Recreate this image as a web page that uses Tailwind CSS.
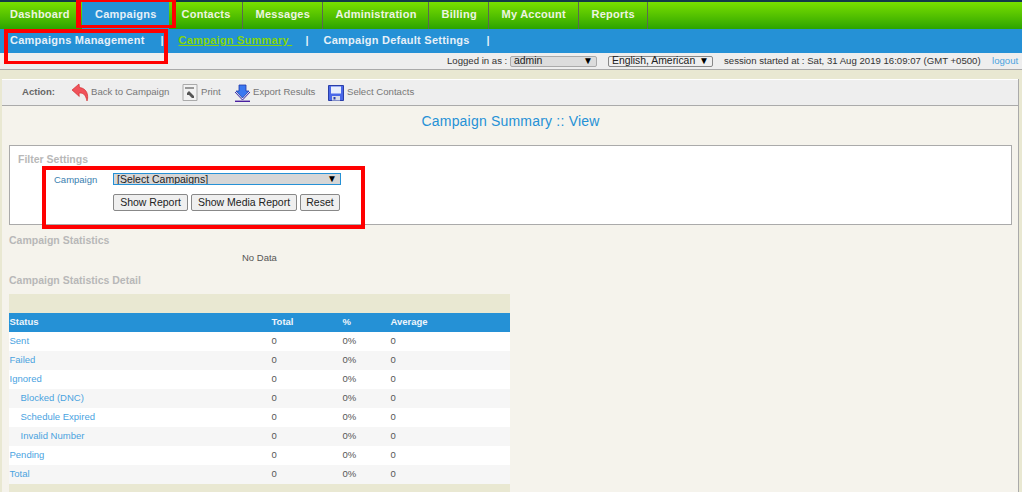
<!DOCTYPE html>
<html lang="en">
<head>
  <meta charset="UTF-8">
  <title>Campaign Summary :: View</title>
  <script src="https://cdn.jsdelivr.net/npm/@tailwindcss/browser@4"></script>
</head>
<body class="bg-white h-[492px] overflow-hidden font-['Liberation_Sans',Arial,sans-serif]">
<div class="relative w-[1022px] h-[492px] overflow-hidden bg-[#e9e8d2]">

  <!-- Main nav -->
  <div class="h-[2px] bg-[#12384a]"></div>
  <nav class="flex h-[27px] bg-gradient-to-b from-[#78e000] to-[#2aa400] text-[11px] font-bold tracking-[0.25px] text-[#eef5e0] leading-[25px]">
    <a class="w-[82px] pl-[10px]">Dashboard</a>
    <a class="w-[87px] pl-[13px] bg-[#2591d6] text-[#e6f0f8]">Campaigns</a>
    <a class="w-[74px] pl-[12.5px] border-r border-[#5a6a50]">Contacts</a>
    <a class="w-[80px] pl-[12.5px] border-r border-[#5a6a50]">Messages</a>
    <a class="w-[106px] pl-[12.5px] border-r border-[#5a6a50]">Administration</a>
    <a class="w-[60px] pl-[12.5px] border-r border-[#5a6a50]">Billing</a>
    <a class="w-[90px] pl-[12.5px] border-r border-[#5a6a50]">My Account</a>
    <a class="w-[69px] pl-[12.5px] border-r border-[#5a6a50]">Reports</a>
  </nav>

  <!-- Sub nav -->
  <div class="flex h-[24px] bg-[#2591d6] text-[11px] font-bold tracking-[0.25px] text-[#e6f0f8] leading-[22px]">
    <a class="w-[160.5px] pl-[10px]">Campaigns Management</a>
    <span class="w-[18px]">|</span>
    <a class="w-[127px] text-[#84d60a] underline whitespace-pre">Campaign Summary </a>
    <span class="w-[18px]">|</span>
    <a class="w-[163px]">Campaign Default Settings</a>
    <span>|</span>
  </div>

  <!-- Session bar -->
  <div class="flex items-center h-[17px] pl-[447px] bg-[#eeeeee] border-b border-[#aaaaaa] text-[9.6px] text-[#333]">
    <span class="w-[63px]">Logged in as :</span>
    <div class="flex justify-between items-center w-[87px] h-[11px] px-[3px] mr-[11px] border border-[#aaa] rounded-[2px] bg-[#dcdcdc] text-[10.400px] text-[#222] leading-none whitespace-nowrap">
      <span>admin</span><span class="text-[10px] text-black">▼</span>
    </div>
    <div class="flex justify-between items-center w-[105px] h-[11px] px-[3px] mr-[11px] border border-[#888] rounded-[2px] bg-[#efefef] text-[10.400px] text-[#222] leading-none whitespace-nowrap">
      <span>English, American</span><span class="text-[10px] text-black">▼</span>
    </div>
    <span class="w-[268px]">session started at : Sat, 31 Aug 2019 16:09:07 (GMT +0500)</span>
    <a class="text-[#4aa3df]">logout</a>
  </div>

  <!-- Panel -->
  <main class="ml-[2px] mt-[9px] w-[1017px] h-[420px] bg-[#f5f3ec] border-r border-[#aaaaaa]">
    <div class="flex items-center h-[27px] bg-[#eeeeee] border-t border-white border-b border-b-[#aaaaaa] text-[9.6px] text-[#777]">
      <b class="w-[69px] pl-[20px] text-[#666]">Action:</b>
      <svg class="w-[18px] h-[19px]" viewBox="0 0 18 19">
        <path d="M1 7 8 1l.5 3.500C13 5 16 8 16.500 12c.3 2 .3 4-.5 6-.6-3-2-6-3.500-7-1.500-1-3-1-4.500-.8l.3 3.300z" fill="#f0525a" stroke="#c22" stroke-width=".6"/>
      </svg>
      <span class="w-[93px] pl-[2px]">Back to Campaign</span>
      <svg class="w-[16px] h-[17px]" viewBox="0 0 16 17">
        <path d="M1 .5h14v16H1z" fill="#f2f2f2" stroke="#aaa"/>
        <path d="M3 3h9v2H3z" fill="#999"/>
        <path d="M5 9l2-2 2 2 3 3v2h-2L7 11H5z" fill="#555"/>
      </svg>
      <span class="w-[36px] pl-[3px]">Print</span>
      <svg class="w-[17px] h-[18px]" viewBox="0 0 17 18">
        <path d="M5 1h7v6h3l-6.500 7L2 7h3z" fill="#3a78f0" stroke="#2238a8" stroke-width=".8"/>
        <path d="M1 8l7.500 8L16 8" fill="none" stroke="#3b2aa8" stroke-width="1"/>
        <path d="M1 17.300h15" stroke="#4a20a0" stroke-width="1.400"/>
      </svg>
      <span class="w-[77px] pl-[2px]">Export Results</span>
      <svg class="w-[16px] h-[16px]" viewBox="0 0 16 16">
        <path d="M.5.500h15v15H.5z" fill="#4a68e8" stroke="#2a3ea8"/>
        <path d="M3 1.500h10v7H3z" fill="#e8eefc"/>
        <path d="M4 11h8v4.500H4z" fill="#d8dce8"/>
        <path d="M5.500 12h2v2.500h-2z" fill="#2a3ea8"/>
      </svg>
      <span class="pl-[3px]">Select Contacts</span>
    </div>

    <h1 class="mt-[5px] text-center text-[14px] tracking-[0.2px] leading-[20px] text-[#2591d6] w-[1017px]">Campaign Summary :: View</h1>

    <!-- Filter settings -->
    <section class="mt-[14px] ml-[7px] w-[1003px] h-[80px] bg-white border border-[#aaaaaa] pl-[8px] pt-[7px]">
      <h2 class="text-[10.500px] font-bold text-[#b8b8b8] leading-[12px]">Filter Settings</h2>
      <div class="flex mt-[6px] ml-[36px] items-center">
        <label class="w-[59px] pt-[2px] text-[9.500px] text-[#3a80b0]">Campaign</label>
        <div class="flex justify-between items-center w-[228px] h-[12px] px-[3px] overflow-hidden border border-[#2591d6] bg-[#d6d6d6] text-[10.500px] text-[#222] leading-none">
          <span>[Select Campaigns]</span><span class="text-[10px] text-black">▼</span>
        </div>
      </div>
      <div class="flex gap-[3px] mt-[7px] ml-[95px] text-[10.500px] text-[#222]">
        <button class="w-[75px] h-[17px] bg-[#efefef] border border-[#888] rounded-[2px]">Show Report</button>
        <button class="w-[106px] h-[17px] bg-[#efefef] border border-[#888] rounded-[2px]">Show Media Report</button>
        <button class="w-[40px] h-[17px] bg-[#efefef] border border-[#888] rounded-[2px]">Reset</button>
      </div>
    </section>

    <section class="ml-[7px]">
      <h2 class="mt-[9px] text-[10.500px] font-bold text-[#b8b8b8] leading-[12px]">Campaign Statistics</h2>
      <p class="mt-[6px] ml-[233px] text-[9.500px] text-[#555] leading-[12px]">No Data</p>
      <h2 class="mt-[10px] text-[10.500px] font-bold text-[#b8b8b8] leading-[12px]">Campaign Statistics Detail</h2>

      <!-- Stats table -->
      <div class="mt-[8px] w-[501px] bg-[#e9e8d2] pt-[19px] pb-[19px]">
        <table class="w-[501px] table-fixed border-collapse text-[9.500px] text-[#555]">
          <colgroup>
            <col class="w-[262px]"><col class="w-[71px]"><col class="w-[48px]"><col>
          </colgroup>
          <thead class="bg-[#2591d6] text-[#eef5fb] font-bold text-left">
            <tr class="h-[19px]"><th class="pl-[0.5px]">Status</th><th class="pl-[0.5px]">Total</th><th class="pl-[0.5px]">%</th><th class="pl-[0.5px]">Average</th></tr>
          </thead>
          <tbody>
            <tr class="h-[19px] bg-white"><td class="pl-[0.5px] text-[#4aa3df]">Sent</td><td class="pl-[0.5px]">0</td><td class="pl-[0.5px]">0%</td><td class="pl-[0.5px]">0</td></tr>
            <tr class="h-[19px] bg-[#f6f6f6]"><td class="pl-[0.5px] text-[#4aa3df]">Failed</td><td class="pl-[0.5px]">0</td><td class="pl-[0.5px]">0%</td><td class="pl-[0.5px]">0</td></tr>
            <tr class="h-[19px] bg-white"><td class="pl-[0.5px] text-[#4aa3df]">Ignored</td><td class="pl-[0.5px]">0</td><td class="pl-[0.5px]">0%</td><td class="pl-[0.5px]">0</td></tr>
            <tr class="h-[19px] bg-[#f6f6f6]"><td class="pl-[11.5px] text-[#4aa3df]">Blocked (DNC)</td><td class="pl-[0.5px]">0</td><td class="pl-[0.5px]">0%</td><td class="pl-[0.5px]">0</td></tr>
            <tr class="h-[19px] bg-white"><td class="pl-[11.5px] text-[#4aa3df]">Schedule Expired</td><td class="pl-[0.5px]">0</td><td class="pl-[0.5px]">0%</td><td class="pl-[0.5px]">0</td></tr>
            <tr class="h-[19px] bg-[#f6f6f6]"><td class="pl-[11.5px] text-[#4aa3df]">Invalid Number</td><td class="pl-[0.5px]">0</td><td class="pl-[0.5px]">0%</td><td class="pl-[0.5px]">0</td></tr>
            <tr class="h-[19px] bg-white"><td class="pl-[0.5px] text-[#4aa3df]">Pending</td><td class="pl-[0.5px]">0</td><td class="pl-[0.5px]">0%</td><td class="pl-[0.5px]">0</td></tr>
            <tr class="h-[19px] bg-[#f6f6f6]"><td class="pl-[0.5px] text-[#4aa3df]">Total</td><td class="pl-[0.5px]">0</td><td class="pl-[0.5px]">0%</td><td class="pl-[0.5px]">0</td></tr>
          </tbody>
        </table>
      </div>
    </section>
  </main>

  <!-- Red annotation boxes drawn over the screenshot -->
  <div class="absolute left-[76px] top-0 w-[100px] h-[28px] border-[#ff0000] border-t-[2px] border-b-[3px] border-l-[5px] border-r-[4px]"></div>
  <div class="absolute left-[4px] top-[29px] w-[164px] h-[35px] border-[#ff0000] border-t-[4px] border-b-[3px] border-x-[4px]"></div>
  <div class="absolute left-[42px] top-[166px] w-[323px] h-[63px] border-[4px] border-[#ff0000]"></div>
</div>
</body>
</html>
